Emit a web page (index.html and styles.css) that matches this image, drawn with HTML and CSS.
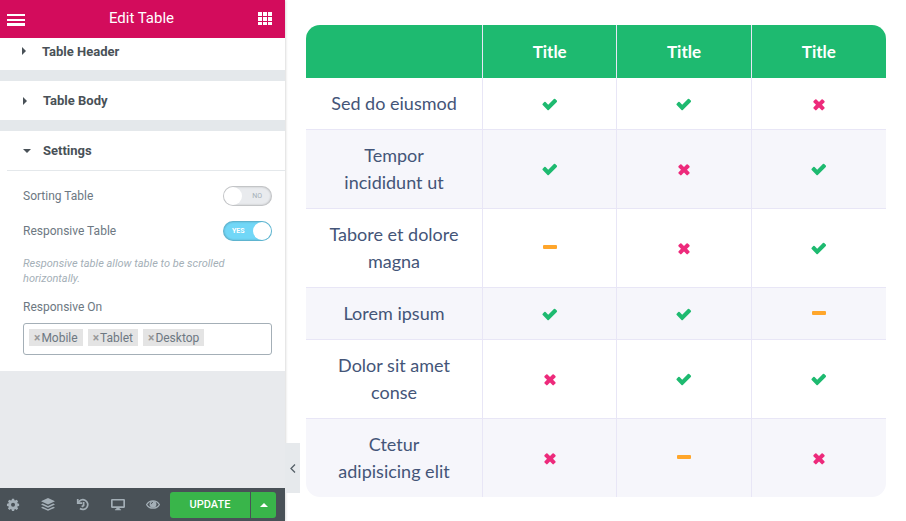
FILE: index.html
```html
<!DOCTYPE html>
<html lang="en">
<head>
<meta charset="utf-8">
<meta name="viewport" content="width=device-width, initial-scale=1">
<title>Edit Table</title>
<link rel="stylesheet" href="styles.css">
</head>
<body>
<svg class="sprite" aria-hidden="true">
  <symbol id="check" viewBox="0 0 16 16"><path d="M.7 9a.9.9 0 0 1 0-1.300l1.600-1.600a.9.9 0 0 1 1.300 0l2.600 2.600 5.700-5.700a.9.9 0 0 1 1.300 0l1.600 1.600a.9.9 0 0 1 0 1.300l-8 8a.9.9 0 0 1-1.300 0z"/></symbol>
  <symbol id="cross" viewBox="0 0 16 16"><path d="M8 6 10.500 3.500a.9.9 0 0 1 1.300 0l1.600 1.600a.9.9 0 0 1 0 1.300L11 8.800l2.400 2.400a.9.9 0 0 1 0 1.300l-1.600 1.600a.9.9 0 0 1-1.300 0L8 11.600l-2.500 2.500a.9.9 0 0 1-1.300 0l-1.600-1.600a.9.9 0 0 1 0-1.300L5 8.800 2.600 6.400a.9.9 0 0 1 0-1.300l1.600-1.600a.9.9 0 0 1 1.300 0z"/></symbol>
  <symbol id="minus" viewBox="0 0 16 16"><rect x="1" y="5" width="14" height="4" rx="1"/></symbol>
</svg>
<div class="editor">
  <aside class="panel">
    <header class="panel-header">
      <button class="bar-button" aria-label="Menu">
        <svg width="18" height="14" viewBox="0 0 18 14"><path d="M0 2h18v2H0zM0 7h18v2H0zM0 11h18v3H0z"/></svg>
      </button>
      <h1 class="panel-title">Edit Table</h1>
      <button class="bar-button" aria-label="Widgets">
        <svg width="14" height="14" viewBox="0 0 14 14"><path d="M0 0h4v4H0zM5 0h4v4H5zM10 0h4v4h-4zM0 5h4v4H0zM5 5h4v4H5zM10 5h4v4h-4zM0 10h4v3H0zM5 10h4v3H5zM10 10h4v3h-4z"/></svg>
      </button>
    </header>
    <div class="sections">
      <button class="section-toggle scrolled" aria-expanded="false">
        <svg class="caret" viewBox="0 0 8 8"><path d="M0 0l4 4-4 4z"/></svg>Table Header
      </button>
      <button class="section-toggle" aria-expanded="false">
        <svg class="caret" viewBox="0 0 8 8"><path d="M0 0l4 4-4 4z"/></svg>Table Body
      </button>
      <section class="section">
        <button class="section-toggle" aria-expanded="true">
          <svg class="caret" viewBox="0 0 8 8"><path d="M0 2h8L4 6z"/></svg>Settings
        </button>
        <div class="controls">
          <div class="control-row">
            <label for="sorting">Sorting Table</label>
            <span class="switch"><input type="checkbox" id="sorting"><span class="switch-text off">NO</span></span>
          </div>
          <div class="control-row">
            <label for="responsive">Responsive Table</label>
            <span class="switch"><input type="checkbox" id="responsive" checked><span class="switch-text on">YES</span></span>
          </div>
          <p class="hint">Responsive table allow table to be scrolled horizontally.</p>
          <label class="field-label" for="devices">Responsive On</label>
          <div class="tag-box">
            <span class="tag"><button aria-label="Remove Mobile">×</button>Mobile</span>
            <span class="tag"><button aria-label="Remove Tablet">×</button>Tablet</span>
            <span class="tag"><button aria-label="Remove Desktop">×</button>Desktop</span>
            <input class="tag-input" id="devices" type="text">
          </div>
        </div>
      </section>
    </div>
    <footer class="panel-footer">
      <button class="tool" aria-label="Settings">
        <svg viewBox="0 0 16 16"><path fill-rule="evenodd" d="M6.600 1h2.800l.4 1.900 1.100.5 1.700-1.100 2 2-1.100 1.700.5 1.100 1.900.4v2.800l-1.900.4-.5 1.100 1.100 1.700-2 2-1.700-1.100-1.100.5-.4 1.900H6.600l-.4-1.900-1.100-.5-1.700 1.100-2-2 1.100-1.700-.5-1.100L.1 10.300V7.500L2 7.100 2.500 6 1.400 4.300l2-2 1.700 1.100 1.100-.5zM8 6.100a2.600 2.600 0 1 0 0 5.200 2.600 2.600 0 0 0 0-5.200z" transform="translate(1 0) scale(.88)"/></svg>
      </button>
      <button class="tool" aria-label="Navigator">
        <svg viewBox="0 0 16 16"><path d="M8 0l8 3.700L8 7.400 0 3.700zM2 6.300l6 2.800 6-2.800 2 1-8 3.700-8-3.700zM2 10l6 2.800 6-2.800 2 1-8 3.700-8-3.700z"/></svg>
      </button>
      <button class="tool" aria-label="History">
        <svg viewBox="0 0 16 16"><path d="M2 1v4.800h5" fill="none" stroke="currentColor" stroke-width="2"/><path d="M2.600 5.500A5.600 5.600 0 1 1 4.500 12M8.700 4.500v4L6.500 10" fill="none" stroke="currentColor" stroke-width="2"/></svg>
      </button>
      <button class="tool" aria-label="Responsive mode">
        <svg viewBox="0 0 16 16"><path fill-rule="evenodd" d="M1.500 1h13c.8 0 1.500.6 1.500 1.400v7.600c0 .8-.7 1.400-1.500 1.400H9.800l.4 1.400h1.300V14h-7v-1.200h1.300l.4-1.400H1.500C.7 11.400 0 10.800 0 10V2.400C0 1.600.7 1 1.500 1zM1.900 2.900v6.600h12.200V2.900z"/></svg>
      </button>
      <button class="tool" aria-label="Preview">
        <svg viewBox="0 0 16 16"><path d="M.7 7.500C4 1.800 12 1.800 15.300 7.500 12 13 4 13 .7 7.500z" fill="none" stroke="currentColor" stroke-width="1.400"/><circle cx="8" cy="7.200" r="3.900"/><path d="M6 7a2 2 0 0 1 2-2" fill="none" stroke="#495157"/></svg>
      </button>
      <div class="publish">
        <button class="update">UPDATE</button>
        <button class="update-more" aria-label="Save options"><svg width="8" height="4" viewBox="0 0 8 4"><path d="M0 4l4-4 4 4z"/></svg></button>
      </div>
    </footer>
    <button class="collapse" aria-label="Hide panel"><svg width="6" height="9" viewBox="0 0 6 9"><path d="M5 .5l-4 4 4 4" fill="none" stroke="#556068" stroke-width="1.300"/></svg></button>
  </aside>
  <main class="preview">
    <table class="compare">
      <thead>
        <tr><th class="feature"></th><th>Title</th><th>Title</th><th>Title</th></tr>
      </thead>
      <tbody>
        <tr>
          <td>Sed do eiusmod</td>
          <td><svg class="mark yes"><use href="#check"/></svg></td>
          <td><svg class="mark yes"><use href="#check"/></svg></td>
          <td><svg class="mark no"><use href="#cross"/></svg></td>
        </tr>
        <tr>
          <td>Tempor<br>incididunt ut</td>
          <td><svg class="mark yes"><use href="#check"/></svg></td>
          <td><svg class="mark no"><use href="#cross"/></svg></td>
          <td><svg class="mark yes"><use href="#check"/></svg></td>
        </tr>
        <tr>
          <td>Tabore et dolore<br>magna</td>
          <td><svg class="mark partial"><use href="#minus"/></svg></td>
          <td><svg class="mark no"><use href="#cross"/></svg></td>
          <td><svg class="mark yes"><use href="#check"/></svg></td>
        </tr>
        <tr>
          <td>Lorem ipsum</td>
          <td><svg class="mark yes"><use href="#check"/></svg></td>
          <td><svg class="mark yes"><use href="#check"/></svg></td>
          <td><svg class="mark partial"><use href="#minus"/></svg></td>
        </tr>
        <tr>
          <td>Dolor sit amet<br>conse</td>
          <td><svg class="mark no"><use href="#cross"/></svg></td>
          <td><svg class="mark yes"><use href="#check"/></svg></td>
          <td><svg class="mark yes"><use href="#check"/></svg></td>
        </tr>
        <tr>
          <td>Ctetur<br>adipisicing elit</td>
          <td><svg class="mark no"><use href="#cross"/></svg></td>
          <td><svg class="mark partial"><use href="#minus"/></svg></td>
          <td><svg class="mark no"><use href="#cross"/></svg></td>
        </tr>
      </tbody>
    </table>
  </main>
</div>
</body>
</html>
```

FILE: styles.css
```css
* { box-sizing: border-box; }

body {
  margin: 0;
  background: #fff;
  font-family: Roboto, "Liberation Sans", sans-serif;
  font-size: 12px;
  color: #6d7882;
}

button {
  margin: 0;
  padding: 0;
  border: 0;
  background: none;
  font: inherit;
  color: inherit;
  cursor: pointer;
}

svg { display: block; fill: currentColor; }

.sprite { position: absolute; width: 0; height: 0; }

.editor { display: flex; min-height: 100vh; }

/* Side panel */
.panel {
  position: relative;
  display: flex;
  flex-direction: column;
  flex: 0 0 285px;
  min-width: 0;
  background: #e8eaed;
  box-shadow: 0 0 3px rgba(0, 0, 0, 0.25);
}

.panel-header {
  display: flex;
  align-items: center;
  justify-content: space-between;
  height: 38px;
  padding: 0 13px 0 7px;
  background: #d30c5c;
  color: #fff;
}

.panel-title {
  margin: 0;
  padding-bottom: 2px;
  font-size: 15px;
  font-weight: 400;
}

.sections {
  display: flex;
  flex-direction: column;
  flex: 1;
  gap: 11px;
  background: linear-gradient(#e4e8eb 0 320px, #e8eaed 330px);
}

.section, .section-toggle { background: #fff; }

.section-toggle {
  display: flex;
  align-items: center;
  gap: 12px;
  width: 100%;
  height: 39px;
  padding-left: 23px;
  font-size: 13px;
  font-weight: 700;
  color: #495157;
}

.section-toggle.scrolled { height: 32px; padding: 0 0 6px 22px; }

.caret { width: 8px; height: 8px; }

.controls {
  margin-left: 7px;
  padding: 15px 13px 16px 16px;
  border-top: 1px solid #e4e8eb;
}

.control-row {
  display: flex;
  align-items: center;
  justify-content: space-between;
  height: 20px;
  margin-bottom: 15px;
}

.switch { position: relative; display: flex; }

.switch input {
  appearance: none;
  display: flex;
  width: 49px;
  height: 20px;
  margin: 0;
  border-radius: 10px;
  background: #e9ebee;
  box-shadow: inset 0 0 2px 1px rgba(0, 0, 0, 0.22);
}

.switch input::before {
  content: "";
  width: 18px;
  height: 18px;
  margin: 1px;
  border-radius: 50%;
  background: #fff;
}

.switch input:checked {
  justify-content: flex-end;
  background: #71d7f7;
}

.switch-text {
  position: absolute;
  top: 6px;
  font-size: 7px;
  line-height: 8px;
  pointer-events: none;
}

.switch-text.off { right: 10px; color: #a4afb7; }
.switch-text.on { left: 9px; color: #fff; font-weight: 700; }

.hint {
  margin: 0 0 14px;
  font-size: 11px;
  font-style: italic;
  line-height: 15px;
  color: #a4afb7;
}

.field-label { display: block; margin-bottom: 9px; line-height: 14px; }

.tag-box {
  display: flex;
  gap: 5px;
  min-height: 32px;
  padding: 5px;
  border: 1px solid #a4afb7;
  border-radius: 3px;
}

.tag {
  display: flex;
  align-items: center;
  gap: 1px;
  height: 17px;
  padding: 0 5px;
  background: #e4e4e4;
}

.tag button { font-weight: 700; color: #999; }

.tag-input {
  flex: 1;
  width: 0;
  min-width: 0;
  height: 17px;
  padding: 0;
  border: 0;
  outline: 0;
  background: none;
  font: inherit;
}

.panel-footer {
  display: flex;
  align-items: center;
  gap: 21px;
  height: 33px;
  padding: 0 9px 0 6px;
  background: #495157;
  color: #a4afb7;
}

.tool svg { width: 14px; height: 14px; }

.publish {
  display: flex;
  flex: 1;
  gap: 1px;
  height: 26px;
  margin-left: -11px;
  color: #fff;
}

.update, .update-more { background: #39b54a; }
.update { flex: 1; border-radius: 3px 0 0 3px; font-size: 11px; font-weight: 500; }

.update-more {
  display: flex;
  align-items: center;
  justify-content: center;
  width: 25px;
  border-radius: 0 3px 3px 0;
}

/* Handle that hangs off the panel's edge */
.collapse {
  position: absolute;
  left: 100%;
  bottom: 28px;
  display: flex;
  align-items: center;
  justify-content: center;
  width: 15px;
  height: 50px;
  background: #e6e9ec;
}

/* Preview */
.preview { flex: 1; min-width: 0; padding: 25px 20px 24px 21px; }

.compare {
  width: 100%;
  table-layout: fixed;
  border-spacing: 0;
  border-radius: 14px;
  overflow: hidden;
  font-family: Lato, "Open Sans", sans-serif;
  font-size: 18px;
  line-height: 27px;
  text-align: center;
  color: #445578;
}

.compare .feature { width: 177px; }

.compare th {
  height: 53px;
  padding: 13px 0;
  border-right: 1px solid #e8e6f6;
  background: #1eba70;
  font-weight: 700;
  font-size: 17px;
  color: #fff;
}

.compare td {
  padding: 12px 0;
  border-right: 1px solid #e8e6f6;
  border-bottom: 1px solid #e8e6f6;
}

.compare th:last-child, .compare td:last-child { border-right: 0; }
.compare tr:last-child td { border-bottom: 0; }
.compare tbody tr:nth-child(even) { background: #f6f6fb; }

.mark { width: 16px; height: 16px; margin: 0 auto; }
.yes { color: #1eba70; }
.no { color: #ed2a7b; }
.partial { color: #ffa62b; }
```
